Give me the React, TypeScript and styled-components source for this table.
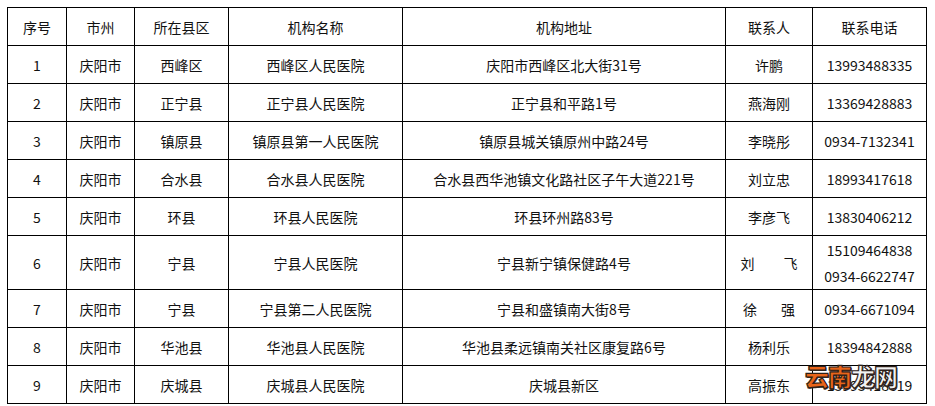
import * as React from "react";
import styled, { createGlobalStyle } from "styled-components";

const GlobalStyle = createGlobalStyle`
  html, body {
    margin: 0;
    padding: 0;
    background: #ffffff;
  }

  body {
    padding: 7px;
    font-family: "Noto Sans CJK SC", "Noto Sans", sans-serif;
    color: #111;
  }
`;

const Wrapper = styled.div`
  position: relative;
  width: 920px;
`;

const Table = styled.table`
  width: 920px;
  border-collapse: collapse;
  table-layout: fixed;
`;

const Cell = styled.td<{ $tall?: boolean }>`
  border: 1px solid #000;
  height: ${(p) => (p.$tall ? "53px" : "37px")};
  padding: 0;
  text-align: center;
  vertical-align: middle;
  font-size: 14px;
  line-height: 26px;
  white-space: nowrap;
`;

const HeadCell = styled(Cell).attrs({ as: "th" })`
  font-weight: 400;
`;

const Spread = styled.span`
  display: inline-flex;
  justify-content: space-between;
  width: ${(p: { $w: number }) => p.$w}px;
`;

const Watermark = styled.div`
  position: absolute;
  right: 30px;
  bottom: 16px;
  font-size: 24px;
  font-weight: 900;
  line-height: 24px;
  letter-spacing: -1px;
  font-family: "Noto Sans CJK SC", sans-serif;
  -webkit-text-stroke: 1.2px #2d2018;
  text-shadow: 1px 1px 0 #3a2e26;
`;

const Orange = styled.span`
  color: #e8641a;
`;

const Grey = styled.span`
  color: #f2f2f2;
`;

const widths = [59, 68, 94, 174, 323, 87, 114];

const headers = ["序号", "市州", "所在县区", "机构名称", "机构地址", "联系人", "联系电话"];

type Row = {
  county: string;
  name: string;
  address: string;
  contact: React.ReactNode;
  phone: React.ReactNode;
  tall?: boolean;
};

const rows: Row[] = [
  { county: "西峰区", name: "西峰区人民医院", address: "庆阳市西峰区北大街31号", contact: "许鹏", phone: "13993488335" },
  { county: "正宁县", name: "正宁县人民医院", address: "正宁县和平路1号", contact: "燕海刚", phone: "13369428883" },
  { county: "镇原县", name: "镇原县第一人民医院", address: "镇原县城关镇原州中路24号", contact: "李晓彤", phone: "0934-7132341" },
  { county: "合水县", name: "合水县人民医院", address: "合水县西华池镇文化路社区子午大道221号", contact: "刘立忠", phone: "18993417618" },
  { county: "环县", name: "环县人民医院", address: "环县环州路83号", contact: "李彦飞", phone: "13830406212" },
  {
    county: "宁县",
    name: "宁县人民医院",
    address: "宁县新宁镇保健路4号",
    contact: (
      <Spread $w={57}>
        <span>刘</span>
        <span>飞</span>
      </Spread>
    ),
    phone: (
      <>
        15109464838
        <br />
        0934-6622747
      </>
    ),
    tall: true,
  },
  {
    county: "宁县",
    name: "宁县第二人民医院",
    address: "宁县和盛镇南大街8号",
    contact: (
      <Spread $w={52}>
        <span>徐</span>
        <span>强</span>
      </Spread>
    ),
    phone: "0934-6671094",
  },
  { county: "华池县", name: "华池县人民医院", address: "华池县柔远镇南关社区康复路6号", contact: "杨利乐", phone: "18394842888" },
  { county: "庆城县", name: "庆城县人民医院", address: "庆城县新区", contact: "高振东", phone: "13993418819" },
];

const App: React.FC = () => {
  return (
    <>
      <GlobalStyle />
      <Wrapper>
        <Table>
          <colgroup>
            {widths.map((w, i) => (
              <col key={i} style={{ width: w }} />
            ))}
          </colgroup>
          <thead>
            <tr>
              {headers.map((h) => (
                <HeadCell key={h}>{h}</HeadCell>
              ))}
            </tr>
          </thead>
          <tbody>
            {rows.map((r, i) => (
              <tr key={i}>
                <Cell $tall={r.tall}>{i + 1}</Cell>
                <Cell $tall={r.tall}>庆阳市</Cell>
                <Cell $tall={r.tall}>{r.county}</Cell>
                <Cell $tall={r.tall}>{r.name}</Cell>
                <Cell $tall={r.tall}>{r.address}</Cell>
                <Cell $tall={r.tall}>{r.contact}</Cell>
                <Cell $tall={r.tall}>{r.phone}</Cell>
              </tr>
            ))}
          </tbody>
        </Table>
        <Watermark>
          <Orange>云南</Orange>
          <Grey>龙网</Grey>
        </Watermark>
      </Wrapper>
    </>
  );
};

export default App;
